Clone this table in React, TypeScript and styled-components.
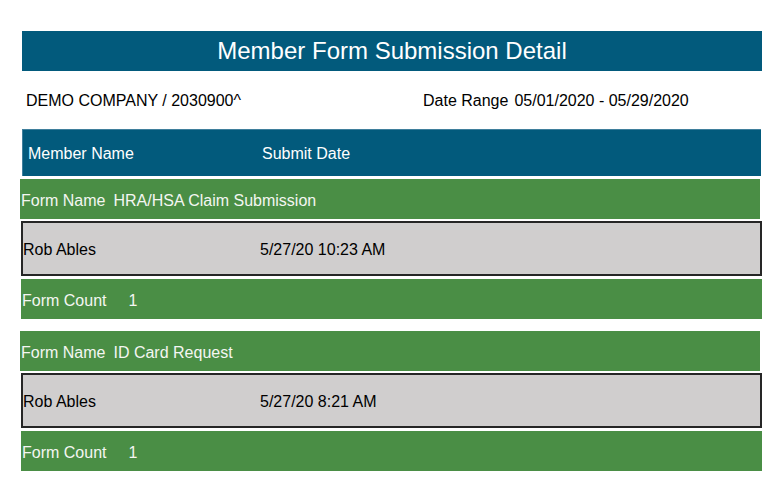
import React from "react";
import styled, { createGlobalStyle } from "styled-components";

const Global = createGlobalStyle`
  html, body { margin: 0; padding: 0; background: #ffffff; }
  body { font-family: "Liberation Sans", Arial, sans-serif; }
`;

const Page = styled.div`
  width: 742px;
  padding: 31px 0 0 20px;
  display: flex;
  flex-direction: column;
  font-size: 16px;
`;

const TitleBar = styled.div`
  margin-left: 2px;
  width: 740px;
  height: 40px;
  background: #025a7c;
  color: #ffffff;
  font-size: 24px;
  display: flex;
  align-items: center;
  justify-content: center;
`;

const InfoRow = styled.div`
  margin-left: 2px;
  height: 58px;
  padding: 2px 0 0 4px;
  box-sizing: border-box;
  display: grid;
  grid-template-columns: 397px 1fr;
  align-items: center;
  color: #000000;
`;

const DateGroup = styled.div`
  display: flex;
  gap: 6px;
`;

const HeaderBar = styled.div`
  margin-left: 2px;
  width: 739px;
  height: 47px;
  box-sizing: border-box;
  background: #025a7c;
  border-top: 1px solid #3f7f9c;
  border-left: 1px solid #3f7f9c;
  color: #ffffff;
  display: grid;
  grid-template-columns: 234px 1fr;
  align-items: center;
  padding: 1px 0 0 5px;
`;

const Section = styled.div<{ $first?: boolean }>`
  display: flex;
  flex-direction: column;
  margin-top: ${(p) => (p.$first ? "3px" : "12px")};
`;

const GreenBar = styled.div<{ $offset: number; $width: number; $gap: number }>`
  margin-left: ${(p) => p.$offset}px;
  width: ${(p) => p.$width}px;
  height: 40px;
  background: #4a8e45;
  color: #f4f6f2;
  display: flex;
  align-items: center;
  gap: ${(p) => p.$gap}px;
  padding: 3px 0 0 1px;
  box-sizing: border-box;
`;

const GrayRow = styled.div`
  margin: 2px 0 3px 1px;
  width: 741px;
  height: 55px;
  box-sizing: border-box;
  background: #d0cece;
  border: 2px solid #262626;
  color: #000000;
  display: grid;
  grid-template-columns: 237px 1fr;
  align-items: center;
  padding-top: 2px;
`;

type Sub = { form: string; member: string; date: string; count: number };

const data: Sub[] = [
  { form: "HRA/HSA Claim Submission", member: "Rob Ables", date: "5/27/20 10:23 AM", count: 1 },
  { form: "ID Card Request", member: "Rob Ables", date: "5/27/20 8:21 AM", count: 1 },
];

export default function App() {
  return (
    <>
      <Global />
      <Page>
        <TitleBar>Member Form Submission Detail</TitleBar>
        <InfoRow>
          <span>DEMO COMPANY / 2030900^</span>
          <DateGroup>
            <span>Date Range</span>
            <span>05/01/2020 - 05/29/2020</span>
          </DateGroup>
        </InfoRow>
        <HeaderBar>
          <span>Member Name</span>
          <span>Submit Date</span>
        </HeaderBar>
        {data.map((d, i) => (
          <Section key={i} $first={i === 0}>
            <GreenBar $offset={0} $width={740} $gap={8}>
              <span>Form Name</span>
              <span>{d.form}</span>
            </GreenBar>
            <GrayRow>
              <span>{d.member}</span>
              <span>{d.date}</span>
            </GrayRow>
            <GreenBar $offset={1} $width={741} $gap={22}>
              <span>Form Count</span>
              <span>{d.count}</span>
            </GreenBar>
          </Section>
        ))}
      </Page>
    </>
  );
}
